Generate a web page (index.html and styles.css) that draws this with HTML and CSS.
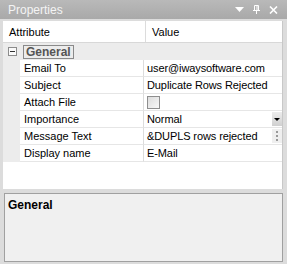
FILE: index.html
```html
<!DOCTYPE html>
<html lang="en">
<head>
    <meta charset="UTF-8">
    <title>Properties</title>
    <link rel="stylesheet" href="styles.css">
</head>
<body>
    <div class="window">
        <div class="title-bar">
            <span class="title">Properties</span>
            <div class="title-tools">
                <svg width="9" height="5" viewBox="0 0 9 5"><path d="M0 0h9L4.5 5z" fill="#fff"/></svg>
                <svg width="7" height="9" viewBox="0 0 7 9"><path d="M1.5 0.5h4v5h-4zM4 1v4.5M0 5.5h7M3.5 5.5V9" stroke="#fff" fill="none"/></svg>
                <svg width="9" height="8" viewBox="0 0 9 8"><path d="M1 0.5l7 7M8 0.5l-7 7" stroke="#fff" stroke-width="1.6"/></svg>
            </div>
        </div>
        <div class="grid">
            <div class="grid-head">
                <div class="head-cell attr-col">Attribute</div>
                <div class="head-cell">Value</div>
            </div>
            <div class="category">
                <span class="toggle"><span class="toggle-bar"></span></span>
                <span class="category-name">General</span>
            </div>
            <div class="prop-row">
                <div class="gutter"></div>
                <div class="prop-name">Email To</div>
                <div class="prop-value">user@iwaysoftware.com</div>
            </div>
            <div class="prop-row">
                <div class="gutter"></div>
                <div class="prop-name">Subject</div>
                <div class="prop-value">Duplicate Rows Rejected</div>
            </div>
            <div class="prop-row">
                <div class="gutter"></div>
                <div class="prop-name">Attach File</div>
                <div class="prop-value"><span class="checkbox"></span></div>
            </div>
            <div class="prop-row">
                <div class="gutter"></div>
                <div class="prop-name">Importance</div>
                <div class="prop-value">
                    <span class="value-text">Normal</span>
                    <span class="edit-button"><span class="arrow"></span></span>
                </div>
            </div>
            <div class="prop-row">
                <div class="gutter"></div>
                <div class="prop-name">Message Text</div>
                <div class="prop-value">
                    <span class="value-text">&amp;DUPLS rows rejected</span>
                    <span class="edit-button dots"><i></i><i></i><i></i></span>
                </div>
            </div>
            <div class="prop-row">
                <div class="gutter"></div>
                <div class="prop-name">Display name</div>
                <div class="prop-value">E-Mail</div>
            </div>
            <div class="grid-fill"></div>
        </div>
        <div class="description">
            <div class="desc-title">General</div>
        </div>
    </div>
</body>
</html>
```

FILE: styles.css
```css
body {
    margin: 0;
    font-family: "Liberation Sans", Arial, sans-serif;
    font-size: 11px;
    background-color: #dcdcdc;
}

.window {
    width: 287px;
    height: 264px;
    display: flex;
    flex-direction: column;
    background-color: #dcdcdc;
}

.title-bar {
    height: 19px;
    display: flex;
    align-items: center;
    justify-content: space-between;
    background: linear-gradient(#b9b9b9, #a9a9a9);
    color: #f4f4f4;
    font-size: 12px;
    padding: 0 9px 0 8px;
    margin-bottom: 2px;
}

.title-tools {
    display: flex;
    align-items: center;
    gap: 9px;
}

.grid {
    flex: 1;
    display: flex;
    flex-direction: column;
    margin: 0 4px 0 3px;
    background-color: #ffffff;
    border-right: 1px solid #c8c8c8;
}

.grid-head {
    height: 21px;
    display: flex;
    border-bottom: 1px solid #d8d8d8;
}

.head-cell {
    display: flex;
    align-items: center;
    padding-left: 6px;
    color: #000;
}

.attr-col {
    width: 136px;
    border-right: 1px solid #dcdcdc;
}

.category {
    height: 17px;
    display: flex;
    align-items: center;
    background-color: #ececec;
}

.toggle {
    width: 7px;
    height: 7px;
    margin-left: 5px;
    border: 1px solid #8c8c8c;
    background-color: #fafafa;
    display: flex;
    align-items: center;
    justify-content: center;
}

.toggle-bar {
    width: 5px;
    height: 1px;
    background-color: #333;
}

.category-name {
    margin-left: 6px;
    padding: 0 2px;
    line-height: 12px;
    border: 1px solid #8a8a8a;
    font-weight: bold;
    color: #555;
    font-size: 12px;
}

.prop-row {
    height: 17px;
    display: flex;
}

.gutter {
    width: 17px;
    background-color: #ececec;
}

.prop-name {
    width: 119px;
    padding-left: 4px;
    display: flex;
    align-items: center;
    border-bottom: 1px solid #e6e6e6;
    border-right: 1px solid #dcdcdc;
    color: #000;
}

.prop-value {
    flex: 1;
    display: flex;
    align-items: center;
    justify-content: space-between;
    padding-left: 3px;
    border-bottom: 1px solid #e6e6e6;
    color: #000;
    letter-spacing: -0.1px;
}

.checkbox {
    width: 11px;
    height: 11px;
    border: 1px solid #8e8e8e;
    background: linear-gradient(135deg, #dcdcdc, #f8f8f8);
}

.edit-button {
    width: 10px;
    align-self: stretch;
    margin: 1px 0;
    background: linear-gradient(#ececec, #d0d0d0);
    display: flex;
    align-items: center;
    justify-content: center;
}

.arrow {
    width: 0;
    height: 0;
    border-left: 3px solid transparent;
    border-right: 3px solid transparent;
    border-top: 3px solid #000;
}

.dots {
    flex-direction: column;
    gap: 2px;
    background: #efefef;
}

.dots i {
    width: 2px;
    height: 2px;
    background-color: #999;
}

.grid-fill {
    flex: 1;
}

.description {
    height: 59px;
    margin: 4px 4px 2px 4px;
    border: 1px solid #a0a0a0;
    background-color: #f0f0f0;
    padding: 4px 3px;
}

.desc-title {
    font-weight: bold;
    font-size: 12px;
    color: #000;
}
```
